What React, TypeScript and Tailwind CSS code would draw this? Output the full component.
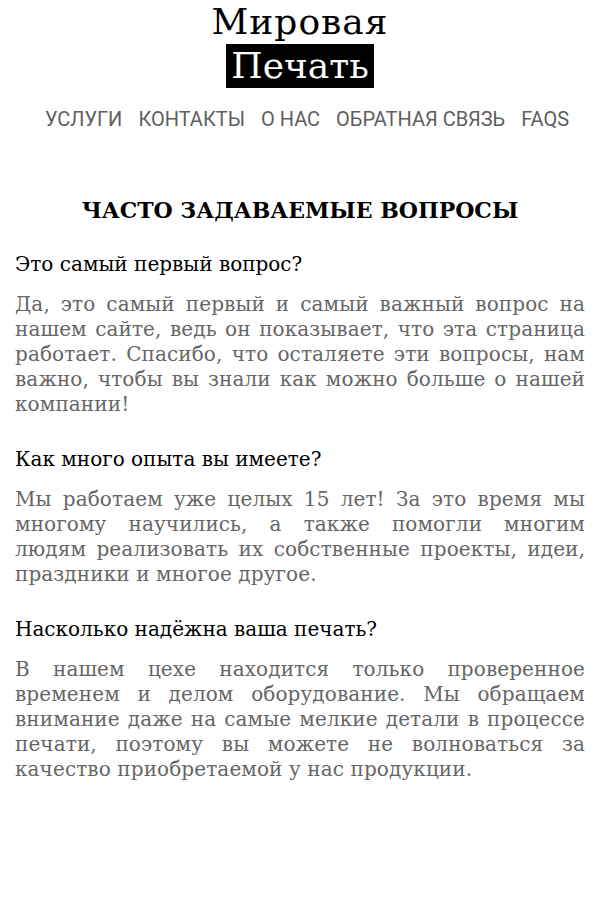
const faqs = [
  {
    q: "Это самый первый вопрос?",
    a: "Да, это самый первый и самый важный вопрос на нашем сайте, ведь он показывает, что эта страница работает. Спасибо, что осталяете эти вопросы, нам важно, чтобы вы знали как можно больше о нашей компании!",
  },
  {
    q: "Как много опыта вы имеете?",
    a: "Мы работаем уже целых 15 лет! За это время мы многому научились, а также помогли многим людям\u00a0реализовать их собственные проекты, идеи, праздники и многое другое.",
  },
  {
    q: "Насколько надёжна ваша печать?",
    a: "В нашем цехе находится только проверенное временем и делом оборудование. Мы обращаем внимание даже на самые мелкие детали в процессе печати, поэтому вы можете не волноваться за качество приобретаемой у нас продукции.",
  },
];

const nav = ["УСЛУГИ", "КОНТАКТЫ", "О НАС", "ОБРАТНАЯ СВЯЗЬ", "FAQS"];

const App = () => {
  return (
    <div className="min-h-[900px] bg-white font-['DejaVu_Serif',serif]">
      <header className="flex flex-col items-center pt-[2px]">
        <h1 className="text-[36px] leading-[40px] tracking-[1px] text-black">Мировая</h1>
        <div className="mt-[2px] bg-black px-[5px] text-[36px] leading-[44px] text-white">
          Печать
        </div>
        <nav className="mt-[16px] flex gap-[16px] pl-[14px] font-['Roboto',sans-serif] text-[20px] leading-[30px] text-[#5e5e5e]">
          {nav.map((item) => (
            <a key={item} href="#">
              {item}
            </a>
          ))}
        </nav>
      </header>

      <main className="px-[15px] pt-[61px]">
        <h2 className="text-center text-[22px] font-bold leading-[30px] text-black">
          ЧАСТО ЗАДАВАЕМЫЕ ВОПРОСЫ
        </h2>
        <div className="mt-[24px] flex flex-col gap-[27px]">
          {faqs.map((f) => (
            <section key={f.q}>
              <h3 className="text-[20px] leading-[30px] text-black">{f.q}</h3>
              <p className="mt-[13px] text-justify text-[20px] leading-[25px] tracking-[0.1px] text-[#666]">
                {f.a}
              </p>
            </section>
          ))}
        </div>
      </main>
    </div>
  );
};

export default App;
